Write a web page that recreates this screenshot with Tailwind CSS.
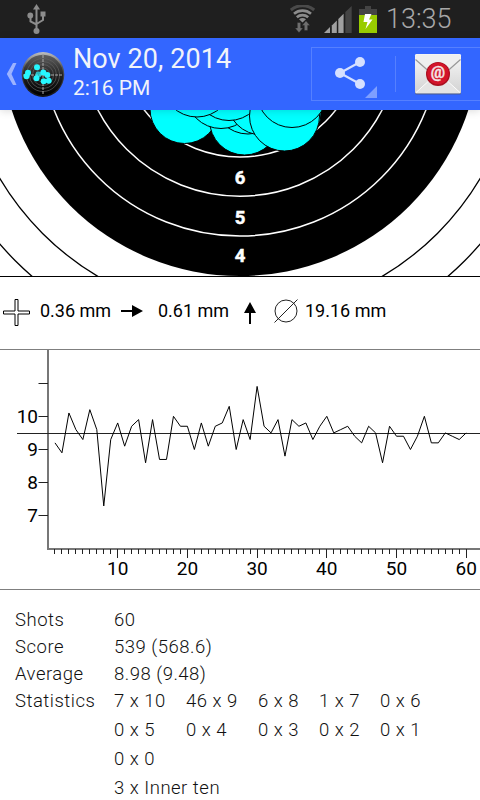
<!DOCTYPE html>
<html lang="en">
<head>
    <meta charset="UTF-8">
    <meta name="viewport" content="width=device-width, initial-scale=1.0">
    <title>Shooting Session</title>
    <script src="https://cdn.jsdelivr.net/npm/@tailwindcss/browser@4"></script>
</head>
<body class="w-[480px] h-[800px] overflow-hidden bg-white text-black font-[Roboto,sans-serif]">

    <!-- Status bar -->
    <div class="h-[38px] bg-[#1f1f1f] flex items-center pl-[26px] pr-7 text-[#8c8c8c]">
        <svg class="w-5 h-[30px]" viewBox="0 0 20 30" fill="none" stroke="#8c8c8c" stroke-width="2">
            <path d="M10.500 4V27M4.500 12V17.500L10.500 20.500M17 10V16L10.500 20"/>
            <path d="M10.500 0L14 5.500H7Z" fill="#8c8c8c" stroke="none"/>
            <circle cx="4.300" cy="11.500" r="2.900" fill="#8c8c8c" stroke="none"/>
            <rect x="14.500" y="7.500" width="5" height="5" fill="#8c8c8c" stroke="none"/>
            <circle cx="10.500" cy="27" r="3" fill="#8c8c8c" stroke="none"/>
        </svg>
        <div class="ml-auto flex items-center">
            <svg class="w-[26px] h-7" viewBox="0 0 26 28" fill="none">
                <path d="M0.800 5A18 18 0 0 1 24.200 5" stroke="#4a4a4a" stroke-width="3"/>
                <path d="M4 8.800A13 13 0 0 1 21 8.800M6.800 12.300A8.600 8.600 0 0 1 18.200 12.300" stroke="#8c8c8c" stroke-width="2.600"/>
                <path d="M9 14.300Q12.500 11.800 16 14.300L12.500 17.500Z" fill="#8c8c8c"/>
                <path d="M7.300 17.500H10.700V23H13L9 27.800L5 23H7.300ZM14.300 25.500V20.500H12L16 15.800L20 20.500H17.700V25.500Z" fill="#6e6e6e" stroke="#1f1f1f" stroke-width="0.400"/>
            </svg>
            <svg class="ml-2 w-7 h-[27px]" viewBox="0 0 28 27">
                <path d="M0 27L6 21V27Z" fill="#a0a0a0"/>
                <path d="M7.800 19.500L12.800 14.500V27H7.800Z" fill="#a0a0a0"/>
                <path d="M14.300 13L19.600 7.700V27H14.300Z" fill="#a0a0a0"/>
                <path d="M21.300 6L27.700 0V27H21.300Z" fill="#444"/>
            </svg>
            <svg class="ml-[7px] w-[18px] h-[27px]" viewBox="0 0 18 27">
                <path d="M6 0H12V3H18V9H0V3H6Z" fill="#444"/>
                <rect y="9" width="18" height="18" fill="#99cc00"/>
                <path d="M6 8H12.500L10 13.500H13.500L6.500 23L8.500 16H4.500Z" fill="#fff"/>
            </svg>
            <span class="ml-[9px] w-[66px] text-[27px] font-light leading-[38px] whitespace-nowrap text-[#a8a8a8]">13:35</span>
        </div>
    </div>

    <!-- Action bar -->
    <header class="relative z-10 h-[72px] bg-[#3366ff] shadow-[0_1px_8px_rgba(0,0,0,0.15)] flex items-center text-[#f1f3fa]">
        <svg class="ml-[6px] w-[11px] h-[22px]" viewBox="0 0 11 22">
            <path d="M7 0H10.500L5.500 11L10.500 22H7L0.800 11Z" fill="#9cb3ff"/>
        </svg>
        <svg class="ml-[4px] w-11 h-12" viewBox="0 0 44 48">
            <defs>
                <linearGradient id="rim" x2="0" y2="1"><stop stop-color="#c0c0c0"/><stop offset="0.35" stop-color="#555"/><stop offset="1" stop-color="#111"/></linearGradient>
                <linearGradient id="face" x2="0" y2="1"><stop stop-color="#606060"/><stop offset="0.5" stop-color="#222"/><stop offset="1" stop-color="#000"/></linearGradient>
            </defs>
            <ellipse cx="22" cy="24.500" rx="21.300" ry="22.500" fill="url(#rim)"/>
            <circle cx="22" cy="25" r="20.200" fill="url(#face)"/>
            <g fill="none" stroke="#626262" stroke-width="0.700">
                <circle cx="22" cy="25" r="16.500"/><circle cx="22" cy="25" r="13.500"/><circle cx="22" cy="25" r="10.500"/><circle cx="22" cy="25" r="7"/>
            </g>
            <path d="M22 5V45M2 25H42" stroke="#aaa" stroke-width="1" stroke-dasharray="3 1"/>
            <g fill="#26f7ff">
                <circle cx="16" cy="17.300" r="3"/><circle cx="7" cy="22.700" r="3"/><circle cx="5.500" cy="26.300" r="3"/><circle cx="15.500" cy="28.300" r="3"/>
                <circle cx="22.300" cy="22.500" r="3"/><circle cx="26.300" cy="25" r="3"/><circle cx="22.700" cy="31.300" r="3"/><circle cx="27.700" cy="30.700" r="3"/>
                <circle cx="17.500" cy="24.500" r="3" opacity="0.700"/>
            </g>
        </svg>
        <div class="ml-[8px] -mt-[2px] whitespace-nowrap">
            <h1 class="text-[27px] leading-[30px] tracking-[0.080px]">Nov 20, 2014</h1>
            <p class="text-[21px] leading-[28px]">2:16 PM</p>
        </div>
        <div class="ml-auto w-[169px] h-[54px] border border-r-0 border-[#5580ff] flex items-center">
            <svg class="w-[83px] h-[52px]" viewBox="0 0 83 52">
                <path d="M48 14L28 25L48 36" fill="none" stroke="#d6e0ff" stroke-width="2.200"/>
                <g fill="#d6e0ff"><circle cx="48" cy="14" r="5"/><circle cx="28" cy="25" r="5"/><circle cx="48" cy="36" r="5"/></g>
                <path d="M65 38V50H53Z" fill="#7f9fff"/>
            </svg>
            <div class="w-px h-9 bg-[#5580ff]"></div>
            <svg class="ml-[18px] w-[48px] h-[42px]" viewBox="0 0 48 42">
                <defs>
                    <linearGradient id="paper" x2="0" y2="1"><stop stop-color="#f8f8f8"/><stop offset="1" stop-color="#d2d2d2"/></linearGradient>
                </defs>
                <rect x="1" y="2" width="46" height="39.500" rx="1.500" fill="#4a5a90"/>
                <rect x="1" y="1" width="46" height="39.500" rx="1.500" fill="url(#paper)"/>
                <path d="M1.500 40L18 25H30L46.500 40Z" fill="#e4e4e4"/>
                <path d="M2 39.500L18 25M46 39.500L30 25" stroke="#fff" stroke-width="0.900"/>
                <path d="M1.500 6L20 22H28L46.500 6V1.500H1.500Z" fill="#efefef"/>
                <path d="M1.500 6.500L19 22M46.500 6.500L29 22" stroke="#999" stroke-width="1.200"/>
                <circle cx="24" cy="21" r="12" fill="#a80f1e"/>
                <circle cx="24" cy="20.500" r="10.800" fill="#d3142a"/>
                <text x="24" y="25" text-anchor="middle" fill="#f4e4e4" stroke="#f4e4e4" stroke-width="0.300" class="text-[16px] font-bold">@</text>
            </svg>
        </div>
    </header>

    <!-- Target -->
    <svg class="block w-[480px] h-[166px]" viewBox="0 110 480 166">
        <g fill="none" stroke="#000" stroke-width="1.300">
            <circle cx="240" cy="36" r="317.800"/>
            <circle cx="240" cy="36" r="279.200"/>
        </g>
        <circle cx="240" cy="36" r="240"/>
        <g fill="none" stroke="#fff" stroke-width="1.500">
            <circle cx="240" cy="36" r="200.100"/>
            <circle cx="240" cy="36" r="160.200"/>
            <circle cx="240" cy="36" r="121"/>
        </g>
        <g fill="#0ff" stroke="#000" stroke-width="1">
            <circle cx="286" cy="113" r="35"/>
            <circle cx="184.500" cy="109" r="34.500"/>
            <circle cx="244.500" cy="120" r="35"/>
            <circle cx="248" cy="99" r="35"/>
            <circle cx="221" cy="93.500" r="35"/>
            <circle cx="262" cy="100" r="35"/>
            <circle cx="229" cy="85.500" r="35"/>
            <circle cx="197" cy="82" r="35"/>
            <circle cx="284.500" cy="116" r="35"/>
            <circle cx="292" cy="92.500" r="35"/>
        </g>
        <g class="text-[18.500px] font-bold" fill="#fff" stroke="#fff" stroke-width="0.500" text-anchor="middle">
            <text x="240" y="184">6</text>
            <text x="240" y="224">5</text>
            <text x="240" y="262">4</text>
        </g>
    </svg>

    <!-- Offsets and group size -->
    <div class="h-[74px] pb-[5px] border-t border-black border-b border-b-[#7f7f7f] flex items-center text-[18px] whitespace-nowrap">
        <svg class="mt-[3px] ml-[3px] w-[27px] h-[27px]" viewBox="0 0 27 27" fill="#fff" stroke="#000">
            <path d="M12 0.500H15V12H26.500V15H15V26.500H12V15H0.500V12H12Z"/>
        </svg>
        <span class="ml-[10px] w-[81px]">0.36 mm</span>
        <svg class="w-[22px] h-3" viewBox="0 0 22 12"><path d="M0 5H11V0L22 6L11 12V7H0Z"/></svg>
        <span class="ml-[15px] w-[86px]">0.61 mm</span>
        <svg class="mt-[5px] w-3 h-[22px]" viewBox="0 0 12 22"><path d="M5 22V11H0L6 0L12 11H7V22Z"/></svg>
        <svg class="ml-[18px] w-6 h-6" viewBox="0 0 24 24" fill="none" stroke="#222">
            <circle cx="12" cy="12" r="11"/><path d="M0.500 23.500L23.500 0.500"/>
        </svg>
        <span class="ml-[7px]">19.16 mm</span>
    </div>

    <!-- Shot values -->
    <div class="h-[240px] border-b border-[#7f7f7f]">
        <svg id="chart" class="block w-[480px] h-[239px] text-[19px]" viewBox="0 350 480 239"></svg>
    </div>

    <!-- Summary -->
    <div class="pl-[15px] pt-[17px] grid grid-cols-[99px_1fr] text-[18.500px] font-light leading-[27px] tracking-[0.500px] text-[#111] whitespace-nowrap">
        <span>Shots</span><span>60</span>
        <span>Score</span><span>539 (568.6)</span>
        <span>Average</span><span>8.98 (9.48)</span>
        <span>Statistics</span>
        <div class="grid grid-cols-[72px_72px_61px_61px_auto] justify-start leading-[29px] -mt-px">
            <span>7 x 10</span><span>46 x 9</span><span>6 x 8</span><span>1 x 7</span><span>0 x 6</span>
            <span>0 x 5</span><span>0 x 4</span><span>0 x 3</span><span>0 x 2</span><span>0 x 1</span>
            <span class="col-span-5">0 x 0</span>
            <span class="col-span-5">3 x Inner ten</span>
        </div>
    </div>

    <script>
        const shots = [
            9.2, 8.9, 10.1, 9.6, 9.3, 10.2, 9.6, 7.3, 9.3, 9.8, 9.1, 9.7, 9.9, 8.6, 9.9, 8.7, 8.7, 10, 9.7, 9.7,
            9, 9.8, 9.1, 9.7, 9.8, 10.3, 9, 9.9, 9.3, 10.9, 9.7, 9.5, 9.9, 8.8, 9.9, 9.7, 9.8, 9.3, 9.7, 10,
            9.5, 9.6, 9.7, 9.4, 9.2, 9.7, 9.5, 8.6, 9.7, 9.4, 9.4, 9, 9.4, 10, 9.2, 9.2, 9.5, 9.4, 9.3, 9.5
        ];
        const px = n => 48 + n * 6.97;
        const py = v => 416.3 + (10 - v) * 33.2;

        let svg = '<path d="M48 350V549M47 549H480" stroke="#777" stroke-width="2"/>';
        for (let v = 7; v <= 11; v++) {
            svg += `<path d="M38.500 ${Math.floor(py(v)) + 0.5}H48" stroke="#222"/>`;
            if (v < 11) svg += `<text x="38" y="${py(v) + 6.5}" text-anchor="end">${v}</text>`;
        }
        for (let n = 1; n <= 60; n++) {
            const x = Math.floor(px(n)) + 0.5;
            svg += `<path d="M${x} 549V${n % 10 ? 554 : 558}" stroke="#222"/>`;
            if (n % 10 === 0) svg += `<text x="${px(n)}" y="575" text-anchor="middle">${n}</text>`;
        }
        svg += '<path d="M17 433.500H480" stroke="#222"/>';
        svg += `<polyline fill="none" stroke="#000" points="${shots.map((v, i) => px(i + 1) + ',' + py(v)).join(' ')}"/>`;
        document.getElementById('chart').innerHTML = svg;
    </script>
</body>
</html>
